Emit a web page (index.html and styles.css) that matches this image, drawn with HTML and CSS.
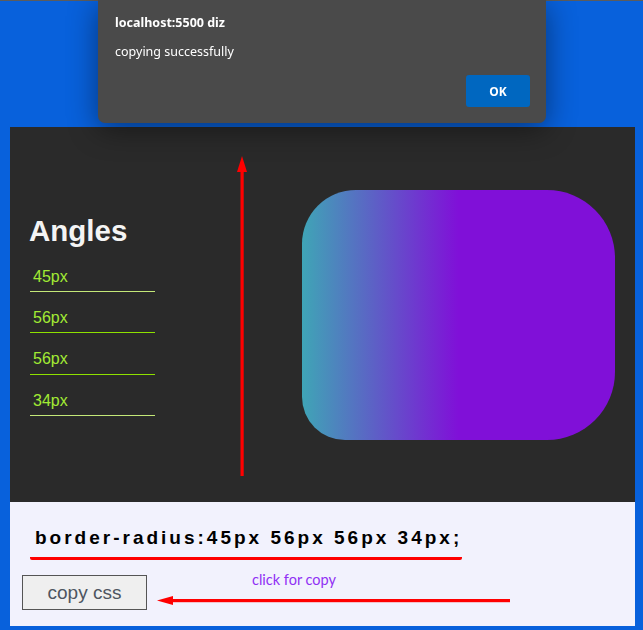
FILE: index.html
```html
<!DOCTYPE html>
<html>
<head>
<meta charset="utf-8">
<title>Angles</title>
<link rel="stylesheet" href="styles.css">
</head>
<body>
<div class="page">
  <section class="stage">
    <div class="controls">
      <h1 class="title">Angles</h1>
      <div class="fields">
        <input class="field field-light" type="text" value="45px">
        <input class="field" type="text" value="56px">
        <input class="field" type="text" value="56px">
        <input class="field field-light" type="text" value="34px">
      </div>
    </div>
    <svg class="v-arrow" width="20" height="321" viewBox="0 0 20 321">
      <polygon points="10,0 5,16 15,16" fill="#ff0000"/>
      <rect x="8.5" y="12" width="3.2" height="308" fill="#ff0000"/>
    </svg>
    <div class="shape"></div>
  </section>
  <section class="output">
    <h2 class="code">border-radius:45px 56px 56px 34px;</h2>
    <div class="actions">
      <button class="copy-btn">copy css</button>
      <div class="hint">
        <span class="hint-label">click for copy</span>
        <svg class="h-arrow" width="354" height="11" viewBox="0 0 354 11">
          <polygon points="0,5.5 16,1 16,10" fill="#ff0000"/>
          <rect x="12" y="4" width="341" height="3.2" fill="#ff0000"/>
        </svg>
      </div>
    </div>
  </section>
</div>

<div class="dialog">
  <div class="dialog-title">localhost:5500 diz</div>
  <div class="dialog-msg">copying successfully</div>
  <div class="dialog-actions">
    <button class="ok-btn">OK</button>
  </div>
</div>
</body>
</html>
```

FILE: styles.css
```css
html, body {
  margin: 0;
  padding: 0;
}
body {
  background: #0861dc;
  border-top: 1px solid #5c5c5c;
  min-height: 629px;
  font-family: "Liberation Sans", Arial, sans-serif;
}
.page {
  padding: 126px 8px 4px 10px;
}
.stage {
  background: #2a2a2a;
  height: 375px;
  display: flex;
  align-items: flex-start;
}
.controls {
  width: 202px;
  margin-left: 20px;
  padding-top: 88px;
}
.title {
  margin: 0 0 0 -1px;
  font-size: 29.5px;
  line-height: 32px;
  font-weight: bold;
  color: #f4f4f4;
}
.fields {
  margin-top: 13px;
  display: flex;
  flex-direction: column;
  gap: 9.4px;
}
.field {
  display: block;
  width: 122px;
  height: 29px;
  box-sizing: content-box;
  padding: 2px 0 0 3px;
  margin: 0;
  border: none;
  border-bottom: 1px solid #8ee000;
  background: transparent;
  color: #a2ea34;
  font-family: "Liberation Sans", Arial, sans-serif;
  font-size: 16px;
  outline: none;
}
.field.field-light {
  border-bottom-color: #c4e878;
}
.v-arrow {
  display: block;
  margin-top: 29px;
}
.shape {
  margin-top: 63px;
  margin-left: 50px;
  width: 313px;
  height: 250px;
  border-radius: 54px 68px 68px 43px;
  background: linear-gradient(90deg, #3fa5b6 0%, #8010d8 50%, #8010d8 100%);
}
.output {
  background: #f2f2fd;
  height: 124px;
  padding: 25px 0 0 20px;
  box-sizing: border-box;
}
.code {
  display: inline-block;
  margin: 0;
  padding: 0 0 8px 5px;
  font-size: 19px;
  line-height: 22px;
  font-weight: bold;
  letter-spacing: 3px;
  color: #000;
  border-bottom: 3px solid #ff0000;
  border-radius: 0 0 2px 2px;
}
.actions {
  display: flex;
  align-items: flex-start;
  margin-top: 15px;
  margin-left: -8px;
}
.copy-btn {
  width: 125px;
  height: 35px;
  margin: 0;
  background: #efefef;
  border: 1px solid #555;
  color: #4d5560;
  font-family: "Liberation Sans", Arial, sans-serif;
  font-size: 19px;
  padding: 0;
}
.hint {
  margin-left: 10px;
  margin-top: -4px;
  display: flex;
  flex-direction: column;
}
.hint-label {
  padding-left: 95px;
  font-family: Lato, sans-serif;
  font-size: 14.5px;
  line-height: 18px;
  color: #9030f4;
}
.h-arrow {
  display: block;
  margin-top: 6px;
}
.dialog {
  position: fixed;
  top: 0;
  left: 98px;
  width: 448px;
  height: 123px;
  box-sizing: border-box;
  background: #4a4a4a;
  border-radius: 0 0 7px 7px;
  box-shadow: 0 6px 30px rgba(0, 0, 0, 0.45);
  padding: 14px 16px 0 17px;
  font-family: "Noto Sans", "Open Sans", sans-serif;
  color: #fff;
}
.dialog-title {
  font-size: 12.5px;
  font-weight: bold;
  line-height: 18px;
}
.dialog-msg {
  margin-top: 11px;
  font-size: 12.5px;
  line-height: 18px;
}
.dialog-actions {
  display: flex;
  justify-content: flex-end;
  margin-top: 14px;
}
.ok-btn {
  width: 64px;
  height: 32px;
  border: none;
  border-radius: 3px;
  background: #0067c0;
  color: #fff;
  font-family: "Noto Sans", "Open Sans", sans-serif;
  font-weight: bold;
  font-size: 12px;
  padding: 0;
}
```
